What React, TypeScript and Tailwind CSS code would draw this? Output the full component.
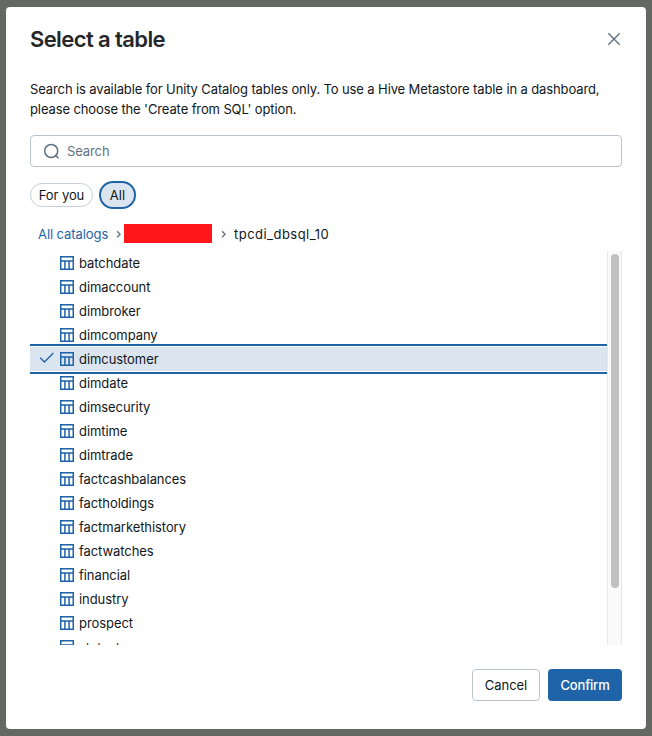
import { ReactNode } from "react";

const tables = [
  "batchdate",
  "dimaccount",
  "dimbroker",
  "dimcompany",
  "dimcustomer",
  "dimdate",
  "dimsecurity",
  "dimtime",
  "dimtrade",
  "factcashbalances",
  "factholdings",
  "factmarkethistory",
  "factwatches",
  "financial",
  "industry",
  "prospect",
  "statustype",
];

function TableIcon() {
  return (
    <svg width="14" height="14" viewBox="0 0 14 14" fill="none" stroke="#1f64a8" strokeWidth="1.5" className="shrink-0">
      <path d="M.75.75h12.5v12.5H.75zM.75 4.9h12.5M4.9 4.9v8.4M9.1 4.9v8.4" />
    </svg>
  );
}

function Chevron() {
  return (
    <svg width="5" height="8" viewBox="0 0 5 8" fill="none" stroke="#5f7281" strokeWidth="1.3" className="shrink-0">
      <path d="M1.1 1.3l3 3-3 3" />
    </svg>
  );
}

function Row({ name, selected }: { name: string; selected: boolean }) {
  return (
    <li
      className={
        selected
          ? "group flex h-6 shrink-0 items-center bg-[#dbe5ef] outline-2 outline-offset-1 outline-[#1f64a8]"
          : "group flex h-6 shrink-0 items-center"
      }
    >
      <span className="flex w-[30px] shrink-0 items-center pl-[9px]">
        {selected && (
          <svg width="16" height="12" viewBox="0 0 16 12" fill="none" stroke="#1f64a8" strokeWidth="1.4" className="-mt-0.5">
            <path d="M1.2 5.8l4.2 4.3 9-9" />
          </svg>
        )}
      </span>
      <TableIcon />
      <span className="ml-[5px] tracking-[-0.07px] group-last:pt-0.5">{name}</span>
    </li>
  );
}

function Crumb({ children }: { children: ReactNode }) {
  return <span className="tracking-[-0.08px] text-[#1f64a8]">{children}</span>;
}

export default function App() {
  return (
    <div className="h-[736px] w-[652px] bg-[#656765] px-1.5 pt-[7px] font-['Inter',sans-serif] text-[13px] leading-5 text-[#11171c]">
      <div className="flex h-[722px] w-[640px] flex-col rounded-[4px] bg-white px-6 pt-4">
        <header className="flex h-8 items-center justify-between">
          <h1 className="text-[22px] font-semibold tracking-[-0.6px] text-[#252628]">Select a table</h1>
          <svg width="16" height="16" viewBox="0 0 16 16" fill="none" stroke="#5f7281" strokeWidth="1.4">
            <path d="M2.3 2.3l11.4 11.4M13.7 2.3L2.3 13.7" />
          </svg>
        </header>
        <p className="mt-6 whitespace-nowrap tracking-[-0.115px]">
          Search is available for Unity Catalog tables only. To use a Hive Metastore table in a dashboard,
          <br />
          please choose the 'Create from SQL' option.
        </p>
        <div className="mt-4 flex h-8 shrink-0 items-center rounded-[4px] border border-[#b9c6d1] pl-3 text-[#5f7281]">
          <svg width="17" height="17" viewBox="0 0 17 17" fill="none" stroke="#5f7281" strokeWidth="1.5">
            <circle cx="8.2" cy="8" r="6.5" />
            <path d="M12.2 12l3.2 3.2" />
          </svg>
          <span className="ml-[7px] tracking-[-0.1px]">Search</span>
        </div>
        <div className="mt-[14px] flex h-7 shrink-0 items-center gap-1.5">
          <span className="flex h-6 w-[63px] items-center justify-center rounded-full border border-[#c6d0da] tracking-[-0.08px]">For you</span>
          <span className="flex h-7 w-[37px] items-center justify-center rounded-full border-2 border-[#1f64a8] bg-[#dbe5ef]">All</span>
        </div>
        <nav className="mt-[15px] flex h-5 shrink-0 items-center pl-2">
          <span className="w-[78px]"><Crumb>All catalogs</Crumb></span>
          <Chevron />
          <span className="mr-[9px] -mt-0.5 ml-[3px] h-[19px] w-[88px] bg-[#ff171b]" />
          <Chevron />
          <span className="ml-[8px] tracking-[0.47px]">tpcdi_dbsql_10</span>
        </nav>
        <div className="mt-[7px] flex h-[394px] shrink-0">
          <ul className="flex w-[577px] flex-col overflow-hidden">
            {tables.map((t) => (
              <Row key={t} name={t} selected={t === "dimcustomer"} />
            ))}
          </ul>
          <div className="w-[15px] border-x border-[#e7e7e7] bg-[#fafafa] pt-[3px] pl-[3px]">
            <div className="h-[334px] w-2 rounded-full bg-[#c1c1c1]" />
          </div>
        </div>
        <footer className="mt-6 flex h-8 shrink-0 justify-end gap-2">
          <button className="w-[68px] rounded-[4px] border border-[#b9c6d1] tracking-[-0.05px]">Cancel</button>
          <button className="w-[74px] rounded-[4px] bg-[#1f64a8] font-medium tracking-[-0.15px] text-white">Confirm</button>
        </footer>
      </div>
    </div>
  );
}
